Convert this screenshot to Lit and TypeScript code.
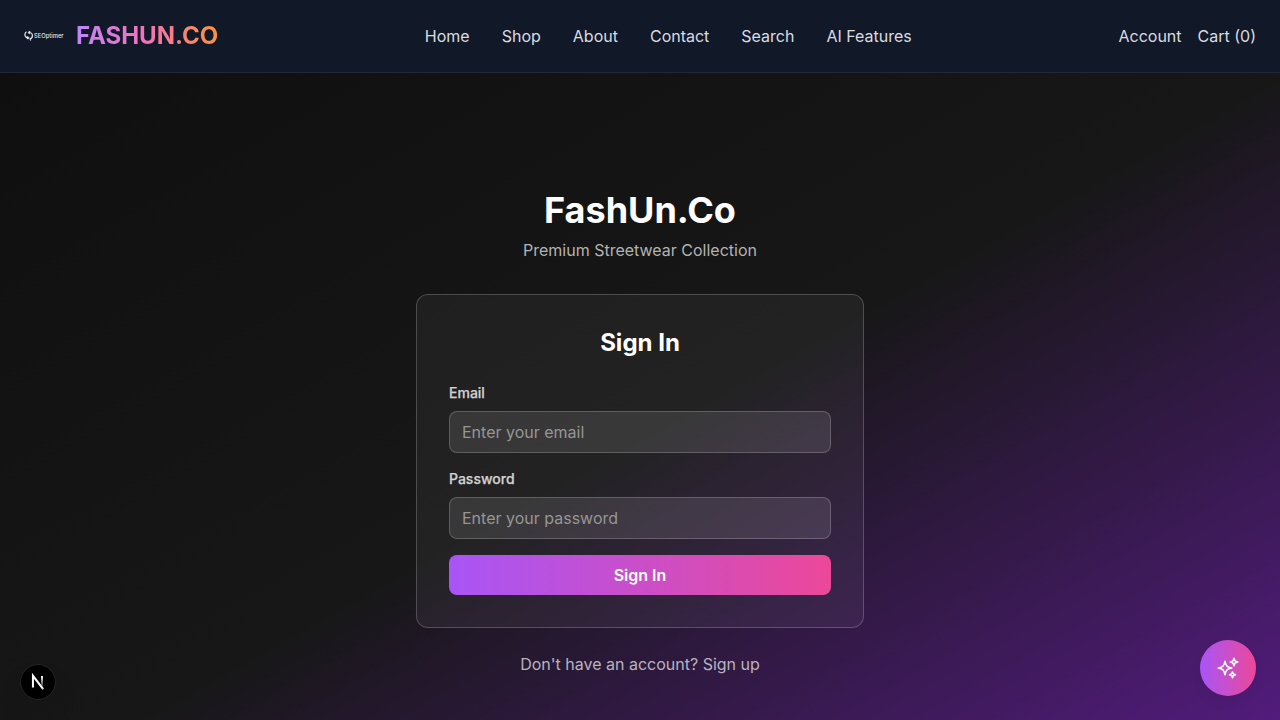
import { LitElement, html, css } from "lit";
import { customElement } from "lit/decorators.js";

const NAV = ["Home", "Shop", "About", "Contact", "Search", "AI Features"];

@customElement("site-header")
class SiteHeader extends LitElement {
  static styles = css`
    :host { display: block; }
    .bar { box-sizing: border-box; height: 73px; padding: 0 24px; display: flex; align-items: center; justify-content: space-between; background: #111827; border-bottom: 1px solid #1f2937; }
    .brand { display: flex; align-items: center; gap: 12px; }
    .logo { display: block; overflow: visible; }
    .logo-text { font: 500 6.2px Inter, sans-serif; }
    .name { font-size: 24px; line-height: 32px; font-weight: 700; background: linear-gradient(to right, #c084fc, #f472b6, #fb923c); -webkit-background-clip: text; background-clip: text; color: transparent; }
    .nav { display: flex; gap: 32px; }
    .actions { display: flex; gap: 16px; }
    .link { color: #d9dce1; text-decoration: none; font-size: 16px; line-height: 24px; }
  `;
  render() {
    return html`<header class="bar">
      <div class="brand">
        <svg class="logo" width="40" height="40" viewBox="0 0 40 40">
          <g fill="none" stroke="#fff" stroke-width="1.2" stroke-opacity=".9">
            <path d="M2.600 15.800C.6 16.800 .3 19.600 1.900 21c.7.7 1.600 1 2.600 1M3.300 20.500l1.400 1.400-1.400 1.200" />
            <path d="M5.600 17.800l-1-1.400 1.500-1.100M4.900 16.500c2 0 3.400 1 3.500 3 .1 1.700-.8 2.900-2.300 3.400l.6 1.600" />
          </g>
          <text class="logo-text" x="10" y="22" fill="#fff" fill-opacity=".92" textLength="29.600" lengthAdjust="spacingAndGlyphs">SEOptimer</text>
        </svg>
        <span class="name">FASHUN.CO</span>
      </div>
      <nav class="nav">${NAV.map((n) => html`<a class="link">${n}</a>`)}</nav>
      <div class="actions"><a class="link">Account</a><a class="link">Cart (0)</a></div>
    </header>`;
  }
}

@customElement("sign-in-card")
class SignInCard extends LitElement {
  static styles = css`
    :host { display: block; }
    .card { box-sizing: border-box; width: 448px; padding: 32px; border: 1px solid rgba(255,255,255,.2); border-radius: 12px; background: rgba(255,255,255,.05); }
    .title { margin: 0 0 24px; font-size: 24px; line-height: 32px; font-weight: 700; text-align: center; color: #fff; }
    .form { display: flex; flex-direction: column; gap: 16px; }
    .label { display: block; font-size: 14px; line-height: 20px; font-weight: 500; color: #d1d1d1; -webkit-text-stroke: .25px #d1d1d1; margin-bottom: 8px; }
    .input { display: block; box-sizing: border-box; width: 100%; height: 42px; padding: 8px 12px; border: 1px solid rgba(255,255,255,.2); border-radius: 8px; background: rgba(255,255,255,.1); color: #fff; font: 16px/24px Inter, sans-serif; }
    .input::placeholder { color: #969696; opacity: 1; }
    .submit { height: 40px; border: 0; border-radius: 8px; background: linear-gradient(to right, #a855f7, #ec4899); color: #fff; font: 600 16px/24px Inter, sans-serif; }
  `;
  render() {
    return html`<div class="card">
      <h2 class="title">Sign In</h2>
      <div class="form">
        <div><label class="label">Email</label><input class="input" type="email" placeholder="Enter your email" /></div>
        <div><label class="label">Password</label><input class="input" type="password" placeholder="Enter your password" /></div>
        <button class="submit">Sign In</button>
      </div>
    </div>`;
  }
}

@customElement("app-root")
class AppRoot extends LitElement {
  static styles = css`
    :host { display: block; position: relative; height: 720px; overflow: hidden; font-family: Inter, sans-serif; }
    .page { height: 720px; display: flex; flex-direction: column; align-items: center; justify-content: center; background: linear-gradient(to bottom right, #0f0f0f, #171717, #581c87); }
    .heading { margin: 0 0 8px; font-size: 36px; line-height: 40px; font-weight: 700; color: #fff; }
    .sub { margin: 0 0 32px; font-size: 16px; line-height: 24px; color: #b3b3b3; }
    .signup { margin: 24px 0 0; font-size: 16px; line-height: 24px; color: #b9b3bf; }
    .chat { position: absolute; right: 24px; bottom: 24px; width: 56px; height: 56px; padding: 0; border: 0; border-radius: 50%; display: flex; align-items: center; justify-content: center; background: linear-gradient(to right, #a855f7, #ec4899); box-shadow: 0 8px 16px -3px rgba(0,0,0,.06); }
    .dev { position: absolute; left: 20px; bottom: 20px; width: 36px; height: 36px; border-radius: 50%; background: #000; box-shadow: 0 0 0 1px #171717, inset 0 0 0 1px #262626, 0 16px 32px -8px rgba(0,0,0,.24); }
    .dev-icon { display: block; }
  `;
  render() {
    return html`
      <site-header></site-header>
      <main class="page">
        <h1 class="heading">FashUn.Co</h1>
        <p class="sub">Premium Streetwear Collection</p>
        <sign-in-card></sign-in-card>
        <p class="signup">Don't have an account? Sign up</p>
      </main>
      <button class="chat" aria-label="Chat">
        <svg width="24" height="24" viewBox="0 0 24 24" fill="none" stroke="#fff" stroke-width="1.6" stroke-linecap="round" stroke-linejoin="round">
          <path d="M9.813 15.904 9 18.75l-.813-2.846a4.5 4.5 0 0 0-3.09-3.09L2.25 12l2.846-.813a4.5 4.5 0 0 0 3.09-3.09L9 5.25l.813 2.846a4.5 4.5 0 0 0 3.09 3.09L15.75 12l-2.846.813a4.5 4.5 0 0 0-3.09 3.09ZM18.259 8.715 18 9.75l-.259-1.035a3.375 3.375 0 0 0-2.455-2.456L14.25 6l1.036-.259a3.375 3.375 0 0 0 2.455-2.456L18 2.25l.259 1.035a3.375 3.375 0 0 0 2.456 2.456L21.75 6l-1.035.259a3.375 3.375 0 0 0-2.456 2.456ZM16.894 20.567 16.5 21.75l-.394-1.183a2.25 2.25 0 0 0-1.423-1.423L13.5 18.75l1.183-.394a2.25 2.25 0 0 0 1.423-1.423l.394-1.183.394 1.183a2.25 2.25 0 0 0 1.423 1.423l1.183.394-1.183.394a2.25 2.25 0 0 0-1.423 1.423Z" />
        </svg>
      </button>
      <div class="dev">
        <svg class="dev-icon" width="36" height="36" viewBox="0 0 36 36" fill="none">
          <defs>
            <linearGradient id="a" x1="9.95" y1="11.1" x2="14.2" y2="16.6" gradientUnits="userSpaceOnUse"><stop stop-color="#fff" /><stop offset=".4" stop-color="#fff" /><stop offset="1" stop-color="#fff" stop-opacity="0" /></linearGradient>
            <linearGradient id="b" x1="11.8" y1="1.5" x2="11.8" y2="14" gradientUnits="userSpaceOnUse"><stop stop-color="#fff" /><stop offset="1" stop-color="#fff" stop-opacity="0" /></linearGradient>
          </defs>
          <g transform="translate(10.6 10.6)" stroke-width="2">
            <path d="M12.800 14.800 2.340 1.200V12.800" stroke="url(#a)" />
            <rect x="10.400" y="1.400" width="2" height="11.400" fill="url(#b)" />
          </g>
        </svg>
      </div>`;
  }
}
